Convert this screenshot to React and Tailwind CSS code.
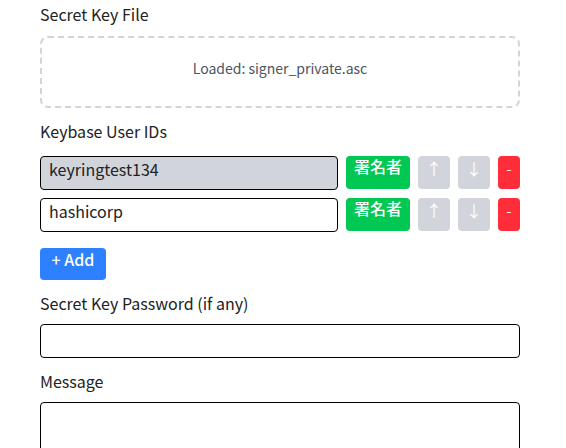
export default function App() {
  const font = { fontFamily: '"Noto Sans CJK JP", "Noto Sans", sans-serif' };
  const rows = [
    { id: "keyringtest134", bg: "bg-[#d1d5db]" },
    { id: "hashicorp", bg: "bg-white" },
  ];
  return (
    <div className="bg-white h-[448px] w-[566px] overflow-hidden" style={font}>
      <div className="ml-10 w-[480px] pt-[2px] text-[#222]">
        <div className="text-base leading-6">Secret Key File</div>
        <div className="mt-[10px] h-[72px] border-2 border-dashed border-[#d1d5db] rounded-lg flex items-center justify-center pb-2 text-[14px] text-[#4b5563]">
          Loaded: signer_private.asc
        </div>
        <div className="mt-[11px] text-base leading-6">Keybase User IDs</div>
        <div className="mt-[13px] flex flex-col gap-2">
          {rows.map((r) => (
            <div key={r.id} className="flex items-start gap-2">
              <div className={`w-[298px] h-[34px] border border-black rounded ${r.bg} px-2 text-[16px] leading-6 text-[#222]`}>
                {r.id}
              </div>
              <button className="w-16 h-[33px] rounded bg-[#00c853] text-white text-[16px] font-medium leading-5 flex justify-center items-start">
                署名者
              </button>
              <button className="w-8 h-[33px] rounded bg-[#d1d5db] text-white text-[16px] leading-6 flex justify-center items-start">
                ↑
              </button>
              <button className="w-8 h-[33px] rounded bg-[#d1d5db] text-white text-[16px] leading-6 flex justify-center items-start">
                ↓
              </button>
              <button className="w-[22px] h-[33px] rounded bg-[#ff2d3a] text-white text-[14px] leading-6 flex justify-center items-start">
                -
              </button>
            </div>
          ))}
        </div>
        <button className="mt-4 w-[66px] h-8 rounded bg-[#2d80ff] text-white text-[16px] font-medium leading-5 flex justify-center items-start pt-[1px]">
          + Add
        </button>
        <div className="mt-[11px] text-base leading-6">Secret Key Password (if any)</div>
        <div className="mt-[9px] h-[34px] border border-black rounded bg-white"></div>
        <div className="mt-[11px] text-base leading-6">Message</div>
        <div className="mt-[9px] h-[80px] border border-black rounded bg-white"></div>
      </div>
    </div>
  );
}
